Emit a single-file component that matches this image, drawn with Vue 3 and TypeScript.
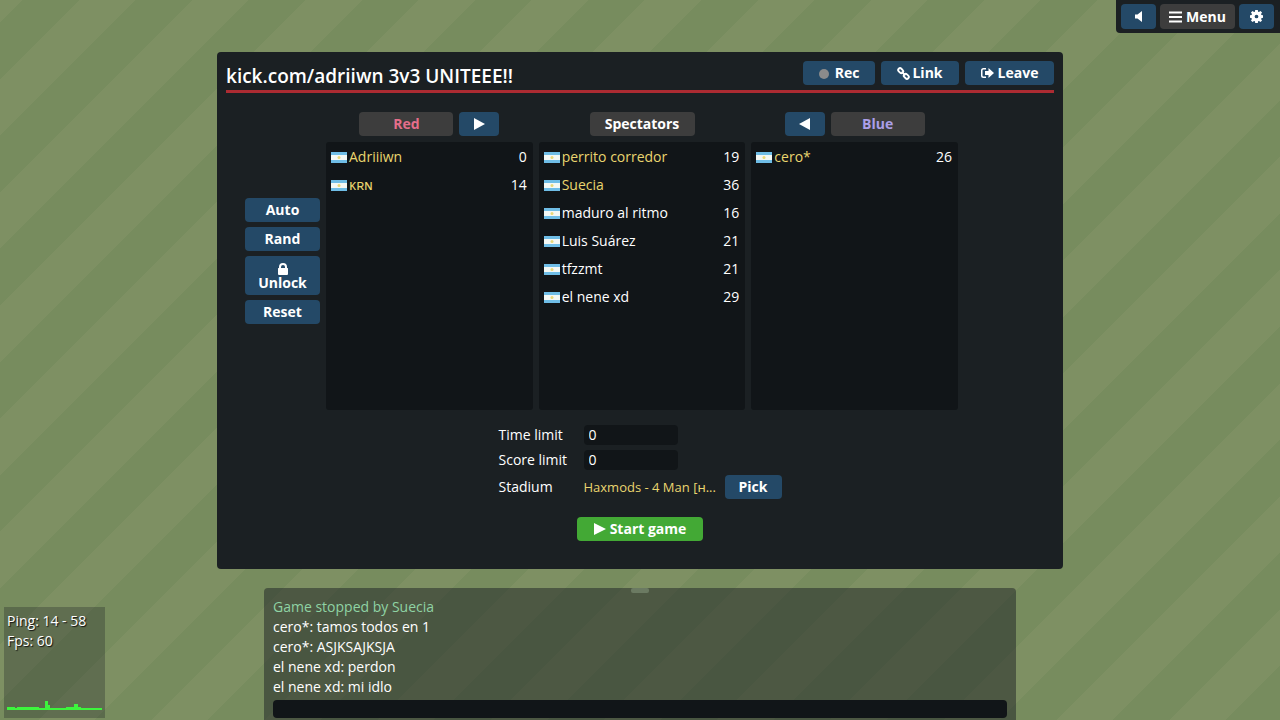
<script setup lang="ts">
import { ref } from 'vue'

interface Player {
  name: string
  ping: number
  admin: boolean
}

interface Line {
  text: string
  notice?: boolean
}

const redTeam: Player[] = [
  { name: 'Adriiiwn', ping: 0, admin: true },
  { name: 'ᴋʀɴ', ping: 14, admin: true },
]

const spectators: Player[] = [
  { name: 'perrito corredor', ping: 19, admin: true },
  { name: 'Suecia', ping: 36, admin: true },
  { name: 'maduro al ritmo', ping: 16, admin: false },
  { name: 'Luis Suárez', ping: 21, admin: false },
  { name: 'tfzzmt', ping: 21, admin: false },
  { name: 'el nene xd', ping: 29, admin: false },
]

const blueTeam: Player[] = [{ name: 'cero*', ping: 26, admin: true }]

const teams = [
  { id: 'red', label: 'Red', players: redTeam },
  { id: 'spec', label: 'Spectators', players: spectators },
  { id: 'blue', label: 'Blue', players: blueTeam },
]

const lines: Line[] = [
  { text: 'Game stopped by Suecia', notice: true },
  { text: 'cero*: tamos todos en 1' },
  { text: 'cero*: ASJKSAJKSJA' },
  { text: 'el nene xd: perdon' },
  { text: 'el nene xd: mi idlo' },
]

const limits = Array.from({ length: 15 }, (_, i) => i)
const timeLimit = ref(0)
const scoreLimit = ref(0)
const message = ref('')
</script>

<template>
  <div class="game">
    <nav class="topbar">
      <button class="btn sound" aria-label="Sound">
        <svg width="7" height="11" viewBox="0 0 7 11"><path d="M0 3.500h2.500L7 0v11L2.500 7.500H0z" /></svg>
      </button>
      <button class="btn grey menu">
        <svg width="13" height="12" viewBox="0 0 13 12"><path d="M0 .5h13v2H0zM0 5h13v2H0zM0 9.500h13v2H0z" /></svg>
        <span>Menu</span>
      </button>
      <button class="btn gear" aria-label="Settings">
        <svg width="13" height="13" viewBox="0 0 16 16">
          <path fill-rule="evenodd" d="M6.400 0h3.200l.4 2.100 1 .4 1.900-1.200 1.900 1.900L13.600 5l.4 1 2 .4v3.200l-2 .4-.4 1 1.200 1.800-1.900 1.900-1.900-1.200-1 .4-.4 2.100H6.400L6 13.900l-1-.4-1.900 1.200-1.900-1.900L2.400 11 2 10l-2-.4V6.400L2 6l.4-1-1.200-1.800 1.900-1.900L5 2.500l1-.4zM8 5.700a2.300 2.300 0 1 0 0 4.600 2.300 2.300 0 0 0 0-4.600z" />
        </svg>
      </button>
    </nav>

    <main class="room">
      <header class="room-head">
        <h1>kick.com/adriiwn 3v3 UNITEEE!!</h1>
        <div class="head-actions">
          <button class="btn rec"><i class="dot"></i>Rec</button>
          <button class="btn link">
            <svg width="13" height="13" viewBox="0 0 14 14" class="line">
              <rect x="-3" y="-2" width="6" height="4" rx="2" transform="translate(4 4) rotate(45)" />
              <rect x="-3" y="-2" width="6" height="4" rx="2" transform="translate(10 10) rotate(45)" />
              <path d="M5 5l4 4" />
            </svg>Link
          </button>
          <button class="btn leave">
            <svg width="13" height="12" viewBox="0 0 13 12">
              <path d="M5 1v1.500H2.500Q1.500 2.500 1.500 3.500v5q0 1 1 1H5V11H2.500Q0 11 0 8.500v-5Q0 1 2.500 1z" />
              <path d="M7.500 1L13 6l-5.500 5V8H4V4h3.500z" />
            </svg>
            <span>Leave</span>
          </button>
        </div>
      </header>

      <section class="teams">
        <div class="tools">
          <button class="btn">Auto</button>
          <button class="btn">Rand</button>
          <button class="btn lock">
            <svg width="10" height="12" viewBox="0 0 10 12">
              <path fill-rule="evenodd" d="M1 5V4a4 4 0 0 1 8 0v1h.5q.5 0 .5.500V11q0 1-1 1H1q-1 0-1-1V5.500Q0 5 .5 5zm2 0h4V4a2 2 0 0 0-4 0z" />
            </svg>
            <span>Unlock</span>
          </button>
          <button class="btn">Reset</button>
        </div>

        <div v-for="team in teams" :key="team.id" class="team" :class="team.id">
          <div class="team-head">
            <button v-if="team.id === 'blue'" class="btn move" aria-label="Move to blue">
              <svg width="11" height="12" viewBox="0 0 11 12"><path d="M11 0v12L0 6z" /></svg>
            </button>
            <button class="btn grey name">{{ team.label }}</button>
            <button v-if="team.id === 'red'" class="btn move" aria-label="Move to red">
              <svg width="11" height="12" viewBox="0 0 11 12"><path d="M0 0v12l11-6z" /></svg>
            </button>
          </div>
          <ul class="list">
            <li v-for="p in team.players" :key="p.name" :class="{ admin: p.admin }">
              <svg class="flag" width="16" height="11" viewBox="0 0 16 11">
                <rect width="16" height="11" fill="#6fbde6" />
                <rect y="3" width="16" height="5" fill="#f4f8f4" />
                <circle cx="8" cy="5.500" r="1.500" fill="#e8d878" />
              </svg>
              <span class="nick">{{ p.name }}</span>
              <span class="ping">{{ p.ping }}</span>
            </li>
          </ul>
        </div>
      </section>

      <section class="settings">
        <label for="time">Time limit</label>
        <select id="time" v-model="timeLimit">
          <option v-for="n in limits" :key="n" :value="n">{{ n }}</option>
        </select>
        <label for="score">Score limit</label>
        <select id="score" v-model="scoreLimit">
          <option v-for="n in limits" :key="n" :value="n">{{ n }}</option>
        </select>
        <span>Stadium</span>
        <div class="stadium">
          <span class="stadium-name">Haxmods - 4 Man [ʜ...</span>
          <button class="btn pick">Pick</button>
        </div>
      </section>

      <button class="btn start">
        <svg width="12" height="12" viewBox="0 0 12 12"><path d="M0 0v12l12-6z" /></svg>
        <span>Start game</span>
      </button>
    </main>

    <section class="chat">
      <div class="grip"></div>
      <p v-for="(l, i) in lines" :key="i" :class="{ notice: l.notice }">{{ l.text }}</p>
      <input v-model="message" type="text" aria-label="Chat message" />
    </section>

    <aside class="stats">
      <p>Ping: 14 - 58</p>
      <p>Fps: 60</p>
      <svg viewBox="0 0 95 12" width="95" height="12">
        <path d="M0 11V8h8v1h2V8h22v1h6V2h3v4h2v3h16V8h8V5h4v3h3v1h21v2z" />
      </svg>
    </aside>
  </div>
</template>

<style>
body {
  margin: 0;
}
</style>

<style scoped>
.game {
  position: relative;
  box-sizing: border-box;
  height: 100vh;
  overflow: hidden;
  padding-top: 52px;
  display: flex;
  flex-direction: column;
  align-items: center;
  font-family: 'Open Sans', 'Noto Sans', sans-serif;
  font-size: 14px;
  line-height: 20px;
  color: #fff;
  background: repeating-linear-gradient(135deg, #7e9063 0 16px, #778c5e 16px 56px, #7e9063 56px 80px);
}

p,
h1,
ul {
  margin: 0;
  padding: 0;
}

svg {
  flex: none;
  fill: currentColor;
}

.btn {
  display: flex;
  align-items: center;
  justify-content: center;
  gap: 4px;
  height: 24px;
  padding: 0;
  border: 0;
  border-radius: 4px;
  background: #244967;
  color: #fff;
  font: bold 14px/20px 'Open Sans', 'Noto Sans', sans-serif;
  cursor: pointer;
}

.btn.grey {
  background: #3d3d3d;
}

.topbar {
  position: absolute;
  top: 0;
  right: 0;
  display: flex;
  gap: 4px;
  padding: 4px 6px 4px 5px;
  border-radius: 0 0 0 4px;
  background: #1b2023;
}

.topbar .btn {
  height: 25px;
}

.sound,
.gear {
  width: 35px;
}

.topbar .menu {
  width: 75px;
}

.room {
  display: flex;
  flex-direction: column;
  align-items: center;
  flex: none;
  box-sizing: border-box;
  width: 100%;
  max-width: 846px;
  padding: 9px 9px 28px;
  border-radius: 4px;
  background: #1b2023;
}

.room-head {
  display: flex;
  justify-content: space-between;
  align-self: stretch;
  height: 29px;
  border-bottom: 3px solid #ac2b32;
}

h1 {
  font-size: 19px;
  line-height: 30px;
  font-weight: 600;
}

.head-actions {
  display: flex;
  gap: 6px;
}

.rec {
  width: 72px;
}

.dot {
  width: 10px;
  height: 10px;
  margin: 2px 2px 0 0;
  border-radius: 50%;
  background: #8b8b8b;
}

.link {
  width: 78px;
  gap: 2px;
}

.line {
  fill: none;
  stroke: currentColor;
  stroke-width: 2;
}

.leave {
  width: 89px;
}

.teams {
  align-self: stretch;
  display: flex;
  gap: 6px;
  margin-top: 19px;
  padding: 0 96px 0 19px;
}

.tools {
  width: 75px;
  padding-top: 86px;
  display: flex;
  flex-direction: column;
  gap: 5px;
}

.tools .lock {
  flex-direction: column;
  gap: 0;
  height: 39px;
  padding-top: 2px;
  line-height: 16px;
}

.team {
  flex: 1;
}

.team-head {
  display: flex;
  justify-content: center;
  gap: 6px;
  margin-bottom: 6px;
}

.move {
  width: 40px;
}

.name {
  width: 94px;
}

.spec .name {
  width: 105px;
}

.red .name {
  color: #e56e8b;
}

.blue .name {
  color: #ab9fe8;
}

.list {
  box-sizing: border-box;
  height: 268px;
  padding: 1px 6px 0 5px;
  border-radius: 3px;
  background: #111518;
  list-style: none;
}

.list li {
  display: flex;
  align-items: center;
  height: 28px;
}

.nick {
  flex: 1;
  margin-left: 2px;
}

.admin .nick,
.stadium-name {
  color: #ead56f;
}

.settings {
  display: grid;
  grid-template-columns: 85px 198px;
  row-gap: 5px;
  align-items: center;
  margin-top: 15px;
}

select {
  appearance: none;
  width: 94px;
  height: 20px;
  padding: 0 5px;
  border: 0;
  border-radius: 4px;
  background: #111518;
  color: #fff;
  font: 14px/20px 'Open Sans', 'Noto Sans', sans-serif;
}

.stadium {
  display: flex;
  align-items: center;
  justify-content: space-between;
}

.stadium-name {
  font-size: 13px;
  white-space: nowrap;
}

.pick {
  width: 57px;
}

.start {
  width: 126px;
  margin-top: 18px;
  background: #43a935;
}

.chat {
  position: relative;
  flex: none;
  box-sizing: border-box;
  width: calc(100% - 24px);
  max-width: 752px;
  min-height: 140px;
  margin-top: 19px;
  padding: 9px 9px 0;
  border-radius: 4px 4px 0 0;
  background: rgba(27, 32, 35, 0.5);
}

.grip {
  position: absolute;
  top: 0;
  left: 50%;
  width: 18px;
  height: 5px;
  margin-left: -9px;
  border-radius: 2px;
  background: #6b7a62;
}

.chat .notice {
  color: #8fd3a4;
}

.chat input {
  display: block;
  box-sizing: border-box;
  width: 100%;
  height: 18px;
  margin-top: 3px;
  padding: 0 5px;
  border: 0;
  border-radius: 4px;
  background: #111518;
  color: #fff;
  font: 14px/18px 'Open Sans', sans-serif;
}

.stats {
  position: absolute;
  left: 4px;
  bottom: 2px;
  box-sizing: border-box;
  width: 101px;
  height: 111px;
  padding: 4px 3px 7px;
  display: flex;
  flex-direction: column;
  background: rgba(27, 32, 35, 0.3);
  text-shadow: 1px 1px 1px #111;
}

.stats svg {
  margin-top: auto;
  fill: #3df53d;
}
</style>
